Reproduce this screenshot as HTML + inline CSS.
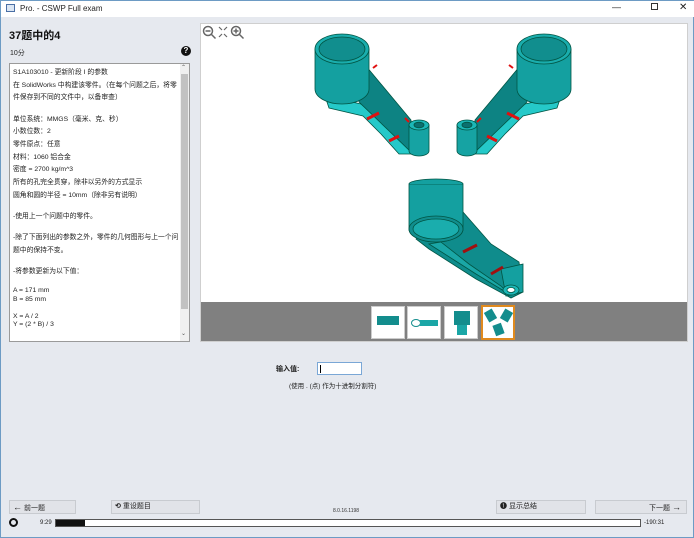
<!DOCTYPE html>
<html><head><meta charset="utf-8"><style>
*{margin:0;padding:0;box-sizing:border-box}
body{width:694px;height:538px;background:#e6e9ef;font-family:"Liberation Sans","Noto Sans CJK SC",sans-serif;position:relative;overflow:hidden;border:1px solid #6d9bc4}
.abs{position:absolute}
.tb{left:0;top:0;width:694px;height:16px;background:#fff;font-size:8px;color:#222}
.txt{left:8px;top:62px;width:181px;height:279px;background:#fff;border:1px solid #9a9a9a;font-size:6.8px;color:#222;padding:3px 3px;line-height:12.7px;overflow:hidden;white-space:nowrap}
.g{height:8.5px}
.sm{line-height:8.5px}
.sb{left:179px;top:63px;width:9px;height:277px;background:#f0f0f0}
.btn{height:14px;background:#e1e3e8;border:1px solid #c8cbd0;font-size:7px;color:#222;line-height:12px}
</style></head><body>
<div class="abs tb"><span class="abs" style="left:5px;top:3px;width:9px;height:8px;border:1px solid #4a6fa5;background:#dbe6f3"></span><span class="abs" style="left:19px;top:3px">Pro. - CSWP Full exam</span>
<span class="abs" style="left:611px;top:1px;font-size:9px">—</span><span class="abs" style="left:650px;top:2px;width:7px;height:7px;border:1px solid #333"></span><span class="abs" style="left:678px;top:1px;font-size:10px">✕</span></div>
<div class="abs" style="left:8px;top:26px;font-size:11px;font-weight:bold;color:#111">37题中的4</div>
<div class="abs" style="left:9px;top:47px;font-size:7px;color:#222">10分</div>
<div class="abs" style="left:180px;top:45px;width:10px;height:10px;border-radius:50%;background:#111;color:#fff;font-size:8px;font-weight:bold;text-align:center;line-height:10px">?</div>
<div class="abs txt">
<div>S1A103010 - 更新阶段 I 的参数</div>
<div>在 SolidWorks 中构建该零件。（在每个问题之后，将零</div>
<div>件保存到不同的文件中，以备审查）</div>
<div class="g"></div>
<div>单位系统：MMGS（毫米、克、秒）</div>
<div>小数位数：2</div>
<div>零件原点：任意</div>
<div>材料：1060 铝合金</div>
<div>密度 = 2700 kg/m^3</div>
<div>所有的孔完全贯穿，除非以另外的方式显示</div>
<div>圆角和圆的半径 = 10mm（除非另有说明）</div>
<div class="g"></div>
<div>-使用上一个问题中的零件。</div>
<div class="g"></div>
<div>-除了下面列出的参数之外，零件的几何图形与上一个问</div>
<div>题中的保持不变。</div>
<div class="g"></div>
<div>-将参数更新为以下值：</div>
<div class="g"></div>
<div class="sm">A = 171 mm</div>
<div class="sm">B = 85 mm</div>
<div class="g"></div>
<div class="sm">X = A / 2</div>
<div class="sm">Y = (2 * B) / 3</div>
</div>
<div class="abs sb"><div class="abs" style="left:1px;top:10px;width:7px;height:235px;background:#c2c2c2"></div><div class="abs" style="left:1px;top:0;font-size:6px;color:#555">⌃</div><div class="abs" style="left:1px;top:266px;font-size:6px;color:#555">⌄</div></div>
<div class="abs" style="left:199px;top:22px;width:488px;height:319px;background:#fff;border:1px solid #cfcfcf"></div>
<div class="abs" style="left:200px;top:301px;width:486px;height:39px;background:#808080"></div>
<svg class="abs" style="left:201px;top:24px" width="50" height="16" viewBox="0 0 50 16" fill="none" stroke="#666" stroke-width="1.5">
<circle cx="6" cy="6" r="4.5"/><path d="M3.5 6h5M9.5 9.5l4 4"/>
<path d="M17 2l3 3M25 2l-3 3M17 12l3-3M25 12l-3-3" stroke-width="1.2"/>
<circle cx="34" cy="6" r="4.5"/><path d="M31.5 6h5M34 3.5v5M37.5 9.5l4 4"/>
</svg>
<svg class="abs" style="left:200px;top:23px" width="486" height="278" viewBox="0 0 486 278">
<defs>
<g id="arm" stroke="#054" stroke-width="0.8">
<path d="M124 72 L160 80 L208 124 L212 130 L198 130 L180 110 L162 92 L128 84 Z" fill="#25c9c9"/>
<path d="M160 36 L210 96 L210 128 L158 78 Z" fill="#0d8383"/>
<path d="M114 25 L114 65 A27 15 0 0 0 168 65 L168 25 Z" fill="#14a0a0"/>
<ellipse cx="141" cy="25" rx="27" ry="15" fill="#1aadad"/>
<ellipse cx="141" cy="25" rx="23" ry="12" fill="#118e8e"/>
<path d="M208 101 L208 127 A10 5 0 0 0 228 127 L228 101 Z" fill="#16a3a3"/>
<ellipse cx="218" cy="101" rx="10" ry="5" fill="#1cb7b7"/>
<ellipse cx="218" cy="101" rx="5" ry="2.8" fill="#0b7070"/>
<g stroke="#e01010" stroke-width="3">
<path d="M166 95 L178 89"/><path d="M188 117 L198 112"/><path d="M172 44 L176 41" stroke-width="2"/><path d="M204 94 L208 98" stroke-width="2"/>
</g>
</g>
</defs>
<use href="#arm"/>
<use href="#arm" transform="translate(484,0) scale(-1,1)"/>
<g stroke="#054" stroke-width="0.8">
<path d="M255 180 L290 220 L318 238 L322 268 L310 274 L275 255 L228 225 L215 215 Z" fill="#0f8c8c"/>
<path d="M228 220 L275 250 L308 270 L300 262 L268 240 L240 218 Z" fill="#1aa6a6"/>
<path d="M208 160 L208 205 A27 13 0 0 0 262 205 L262 160 Z" fill="#14a0a0"/>
<path d="M208 160 A27 5 0 0 1 262 160" fill="#14a0a0"/>
<ellipse cx="235" cy="205" rx="27" ry="13" fill="#118e8e"/>
<ellipse cx="235" cy="205" rx="23" ry="10" fill="#1aadad"/>
<path d="M300 245 L322 240 L322 268 L305 272 Z" fill="#14a0a0"/>
<ellipse cx="310" cy="266" rx="8" ry="5" fill="#1cb7b7"/>
<ellipse cx="310" cy="266" rx="4" ry="2.5" fill="#fff"/>
</g>
<g stroke="#a01010" stroke-width="3"><path d="M262 228 L276 221"/><path d="M290 250 L302 243"/></g>
</svg>
<div class="abs" style="left:370px;top:305px;width:34px;height:33px;background:#fff;border:1px solid #ccc"><div class="abs" style="left:5px;top:9px;width:22px;height:9px;background:#138d8d"></div></div>
<div class="abs" style="left:406px;top:305px;width:34px;height:33px;background:#fff;border:1px solid #ccc"><div class="abs" style="left:3px;top:12px;width:10px;height:8px;border-radius:50%;border:1px solid #138d8d"></div><div class="abs" style="left:12px;top:13px;width:18px;height:6px;background:#1aa6a6"></div></div>
<div class="abs" style="left:443px;top:305px;width:34px;height:33px;background:#fff;border:1px solid #ccc"><div class="abs" style="left:9px;top:4px;width:16px;height:14px;background:#138d8d"></div><div class="abs" style="left:12px;top:18px;width:10px;height:10px;background:#1aa6a6"></div></div>
<div class="abs" style="left:480px;top:304px;width:34px;height:35px;background:#fff;border:2px solid #e08a1e"><div class="abs" style="left:3px;top:3px;width:9px;height:11px;background:#138d8d;transform:rotate(-30deg)"></div><div class="abs" style="left:19px;top:3px;width:9px;height:11px;background:#138d8d;transform:rotate(30deg)"></div><div class="abs" style="left:11px;top:17px;width:9px;height:11px;background:#138d8d;transform:rotate(-20deg)"></div></div>
<div class="abs" style="left:275px;top:363px;font-size:7px;font-weight:bold;color:#222">输入值:</div>
<div class="abs" style="left:316px;top:361px;width:45px;height:13px;background:#fff;border:1px solid #7aa7d6"><div class="abs" style="left:2px;top:2px;width:1px;height:8px;background:#000"></div></div>
<div class="abs" style="left:288px;top:379px;font-size:6.5px;color:#222">(使用 . (点) 作为十进制分割符)</div>
<div class="abs btn" style="left:8px;top:499px;width:67px;padding-left:3px"><b style="font-size:9px">←</b> 前一题</div>
<div class="abs btn" style="left:110px;top:499px;width:89px;padding-left:3px"><b>⟲</b> 重设题目</div>
<div class="abs" style="left:332px;top:507px;font-size:5px;color:#333">8.0.16.1198</div>
<div class="abs btn" style="left:495px;top:499px;width:90px;padding-left:3px">❶ 显示总结</div>
<div class="abs btn" style="left:594px;top:499px;width:92px;text-align:right;padding-right:5px">下一题 <b style="font-size:9px">→</b></div>
<div class="abs" style="left:8px;top:517px;width:9px;height:9px;border-radius:50%;border:2px solid #111"></div>
<div class="abs" style="left:39px;top:519px;font-size:6px;color:#222">9:29</div>
<div class="abs" style="left:54px;top:518px;width:586px;height:8px;background:#fff;border:1px solid #555"><div style="width:29px;height:6px;background:#111"></div></div>
<div class="abs" style="left:643px;top:519px;font-size:6px;color:#222">-190:31</div>
</body></html>
